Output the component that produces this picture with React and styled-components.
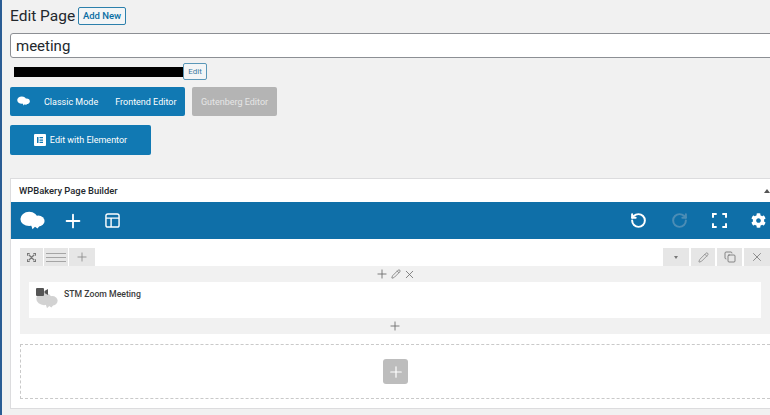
import React from 'react';
import styled, { createGlobalStyle } from 'styled-components';
import { Plus, Pencil, X, Copy, RotateCcw, RotateCw } from 'lucide-react';
import { FaCog } from 'react-icons/fa';

const GlobalStyle = createGlobalStyle`
    html, body {
        margin: 0;
        padding: 0;
        background: #f1f1f1;
    }
    * {
        box-sizing: border-box;
    }
`;

const Cloud = ({ size = 24, color = '#fff' }) => (
    <svg width={size} height={size * 0.8} viewBox="0 0 30 24" fill={color}>
        <ellipse cx="11" cy="9.5" rx="10.5" ry="8.5" />
        <ellipse cx="22" cy="12" rx="7.5" ry="6.5" />
        <path d="M13 16h12l-4 5-3-2-3 3z" />
    </svg>
);

const LayoutIcon = () => (
    <LayoutSvg width="15" height="15" viewBox="0 0 16 16" fill="none" stroke="#fff" strokeWidth="1.5">
        <rect x="1" y="1" width="14" height="14" rx="2" />
        <path d="M1 5.5h14M6.5 5.5V15" />
    </LayoutSvg>
);

const FullscreenIcon = () => (
    <svg width="15" height="15" viewBox="0 0 16 16" fill="none" stroke="#fff" strokeWidth="2.2">
        <path d="M1 5V1h4M11 1h4v4M15 11v4h-4M5 15H1v-4" />
    </svg>
);

const ExpandIcon = () => (
    <svg width="9" height="9" viewBox="0 0 10 10" fill="none" stroke="#777" strokeWidth="1.4">
        <path d="M0.5 3V0.5H3M7 0.5h2.5V3M9.5 7v2.5H7M3 9.5H0.5V7M2 2l6 6M8 2l-6 6" />
    </svg>
);

const LinesIcon = () => (
    <svg width="20" height="9" viewBox="0 0 20 9" stroke="#a5a5a5" strokeWidth="1">
        <path d="M0 .5h20M0 4.5h20M0 8.5h20" />
    </svg>
);

const ElementorIcon = () => (
    <svg width="12" height="12" viewBox="0 0 12 12">
        <rect width="12" height="12" rx="1" fill="#fff" />
        <path d="M3 3h1.5v6H3zM5.5 3H9v1.3H5.5zM5.5 5.4H9v1.3H5.5zM5.5 7.7H9V9H5.5z" fill="#1179b3" />
    </svg>
);

const ZoomIcon = () => (
    <ElementIcon>
        <Cloud size={22} color="#d2d2d2" />
        <Camera viewBox="0 0 12 8" fill="#555">
            <rect width="8" height="8" rx="1" />
            <path d="M8.5 3 12 1v6L8.5 5z" />
        </Camera>
    </ElementIcon>
);

const App = () => {
    return (
        <Page>
            <GlobalStyle />
            <Strip />
            <Main>
                <TitleRow>
                    <Title>Edit Page</Title>
                    <AddNew>Add New</AddNew>
                </TitleRow>
                <TitleInput>meeting</TitleInput>
                <PermalinkRow>
                    <Redacted />
                    <SmallEdit>Edit</SmallEdit>
                </PermalinkRow>
                <ModeRow>
                    <ModeGroup>
                        <Cloud size={13} />
                        <span>Classic Mode</span>
                        <span>Frontend Editor</span>
                    </ModeGroup>
                    <GutenbergButton>Gutenberg Editor</GutenbergButton>
                </ModeRow>
                <ElementorButton>
                    <ElementorIcon />
                    Edit with Elementor
                </ElementorButton>

                <Panel>
                    <PanelHeader>
                        WPBakery Page Builder
                        <Caret />
                    </PanelHeader>
                    <Toolbar>
                        <ToolGroup $gap={17}>
                            <Cloud size={25} />
                            <Plus size={22} color="#fff" strokeWidth={2} />
                            <LayoutIcon />
                        </ToolGroup>
                        <ToolGroup $gap={24}>
                            <RotateCcw size={17} color="#fff" strokeWidth={2.8} />
                            <RotateCw size={17} color="#4c8db5" strokeWidth={2.8} />
                            <FullscreenIcon />
                            <FaCog size={15} color="#fff" />
                        </ToolGroup>
                    </Toolbar>
                    <Content>
                        <TabRow>
                            <TabGroup $gap={1}>
                                <Tab $w={23}><ExpandIcon /></Tab>
                                <Tab $w={24}><LinesIcon /></Tab>
                                <Tab $w={26}><Plus size={14} color="#888" strokeWidth={1.4} /></Tab>
                            </TabGroup>
                            <TabGroup $gap={2}>
                                <Tab $w={26}><DropCaret /></Tab>
                                <Tab $w={24}><Pencil size={11} color="#777" strokeWidth={1.5} /></Tab>
                                <Tab $w={25}><Copy size={12} color="#666" strokeWidth={1.5} /></Tab>
                                <Tab $w={26}><X size={14} color="#777" strokeWidth={1.4} /></Tab>
                            </TabGroup>
                        </TabRow>
                        <RowBody>
                            <InlineControls>
                                <Plus size={14} strokeWidth={1.5} />
                                <Pencil size={10} strokeWidth={1.8} />
                                <X size={13} strokeWidth={1.5} />
                            </InlineControls>
                            <ElementCard>
                                <ZoomIcon />
                                <ElementName>STM Zoom Meeting</ElementName>
                            </ElementCard>
                            <InlineControls>
                                <Plus size={14} strokeWidth={1.5} />
                            </InlineControls>
                        </RowBody>
                        <DropZone>
                            <AddBlock>
                                <Plus size={18} color="#fff" strokeWidth={1.6} />
                            </AddBlock>
                        </DropZone>
                    </Content>
                </Panel>
            </Main>
        </Page>
    );
};

export default App;

const Page = styled.div`
    display: flex;
    width: 770px;
    height: 415px;
    overflow: hidden;
    background: #f1f1f1;
    color: #23282d;
    font-family: Roboto, "Liberation Sans", Arial, sans-serif;
`;

const Strip = styled.div`
    flex: 0 0 2px;
    background: #2a5c94;
`;

const Main = styled.div`
    flex: 0 0 780px;
    padding: 6px 0 0 8px;
`;

const TitleRow = styled.div`
    display: flex;
    align-items: center;
    gap: 7px;
    height: 19px;
`;

const Title = styled.h1`
    width: 61px;
    margin: 0;
    font-size: 15.5px;
    font-weight: 400;
    white-space: nowrap;
`;

const AddNew = styled.button`
    width: 48px;
    height: 18px;
    padding: 0;
    border: 1px solid #2c80ac;
    border-radius: 2px;
    background: #f3f5f6;
    color: #0a6ea4;
    font: 500 9.5px Roboto, "Liberation Sans", Arial, sans-serif;
`;

const TitleInput = styled.div`
    display: flex;
    align-items: center;
    height: 25px;
    margin-top: 8px;
    padding-left: 5px;
    border: 1px solid #8c8f94;
    border-radius: 3px;
    background: #fff;
    font-size: 15px;
`;

const PermalinkRow = styled.div`
    display: flex;
    align-items: center;
    height: 17px;
    margin-top: 5px;
    padding-left: 4px;
`;

const Redacted = styled.div`
    width: 172px;
    height: 10px;
    background: #000;
`;

const SmallEdit = styled.button`
    width: 24px;
    height: 17px;
    margin-left: -3px;
    padding: 0;
    border: 1px solid #5a97b8;
    border-radius: 2px;
    background: #f3f5f6;
    color: #3b7a9e;
    font: 400 8px Roboto, "Liberation Sans", Arial, sans-serif;
`;

const ModeRow = styled.div`
    display: flex;
    gap: 7px;
    margin-top: 7px;
`;

const ModeGroup = styled.div`
    display: flex;
    align-items: center;
    width: 175px;
    height: 29px;
    padding-left: 7px;
    border-radius: 2px;
    background: #1179b3;
    color: #fff;
    font-size: 9px;
    white-space: nowrap;

    span:first-of-type {
        margin-left: 14px;
    }

    span:last-of-type {
        margin-left: 17px;
    }
`;

const GutenbergButton = styled.div`
    display: flex;
    align-items: center;
    justify-content: center;
    width: 85px;
    height: 29px;
    border-radius: 2px;
    background: #b4b4b4;
    color: #e6e6e6;
    font-size: 9px;
    white-space: nowrap;
`;

const ElementorButton = styled.div`
    display: flex;
    align-items: center;
    justify-content: center;
    gap: 4px;
    width: 141px;
    height: 30px;
    margin-top: 9px;
    border-radius: 2px;
    background: #1179b3;
    color: #fff;
    font-size: 9px;
    white-space: nowrap;
`;

const Panel = styled.section`
    margin-top: 23px;
    height: 231px;
    border: 1px solid #dcdcde;
    background: #fff;
`;

const PanelHeader = styled.div`
    display: flex;
    align-items: center;
    height: 23px;
    padding-left: 8px;
    font-size: 9.4px;
    font-weight: 500;
    position: relative;
`;

const Caret = styled.i`
    position: absolute;
    left: 753px;
    top: 10px;
    border-left: 3px solid transparent;
    border-right: 3px solid transparent;
    border-bottom: 4px solid #555;
`;

const Toolbar = styled.div`
    display: flex;
    align-items: center;
    justify-content: space-between;
    height: 37px;
    padding: 0 15px 0 9px;
    background: #0f6fa8;
`;

const ToolGroup = styled.div`
    display: flex;
    align-items: center;
    gap: ${(p) => p.$gap}px;
`;

const LayoutSvg = styled.svg`
    margin-left: 4px;
`;

const Content = styled.div`
    padding: 9px 0 0 9px;
    width: 759px;
`;

const TabRow = styled.div`
    display: flex;
    justify-content: space-between;
    height: 18px;
`;

const TabGroup = styled.div`
    display: flex;
    gap: ${(p) => p.$gap}px;
`;

const Tab = styled.div`
    display: flex;
    align-items: center;
    justify-content: center;
    width: ${(p) => p.$w}px;
    background: #e6e6e6;
`;

const DropCaret = styled.i`
    border-left: 2.5px solid transparent;
    border-right: 2.5px solid transparent;
    border-top: 3px solid #777;
`;

const RowBody = styled.div`
    height: 68px;
    padding: 0 9px;
    background: #f1f1f1;
`;

const InlineControls = styled.div`
    display: flex;
    align-items: center;
    justify-content: center;
    gap: 2px;
    height: 16px;
    color: #6d6d6d;
`;

const ElementCard = styled.div`
    display: flex;
    align-items: flex-start;
    gap: 6px;
    height: 36px;
    padding: 5px 0 0 7px;
    background: #fff;
`;

const ElementIcon = styled.div`
    position: relative;
    width: 22px;
    height: 24px;
    padding-top: 5px;
`;

const Camera = styled.svg`
    position: absolute;
    left: 0;
    top: 1px;
    width: 12px;
    height: 8px;
`;

const ElementName = styled.div`
    margin-top: 2px;
    font-size: 8.7px;
    font-weight: 500;
    color: #3c3c3c;
    white-space: nowrap;
`;

const DropZone = styled.div`
    display: flex;
    align-items: center;
    justify-content: center;
    height: 55px;
    margin-top: 10px;
    border: 1px dashed #c9c9c9;
    border-right: none;
`;

const AddBlock = styled.div`
    display: flex;
    align-items: center;
    justify-content: center;
    width: 25px;
    height: 25px;
    border-radius: 3px;
    background: #bdbdbd;
`;
